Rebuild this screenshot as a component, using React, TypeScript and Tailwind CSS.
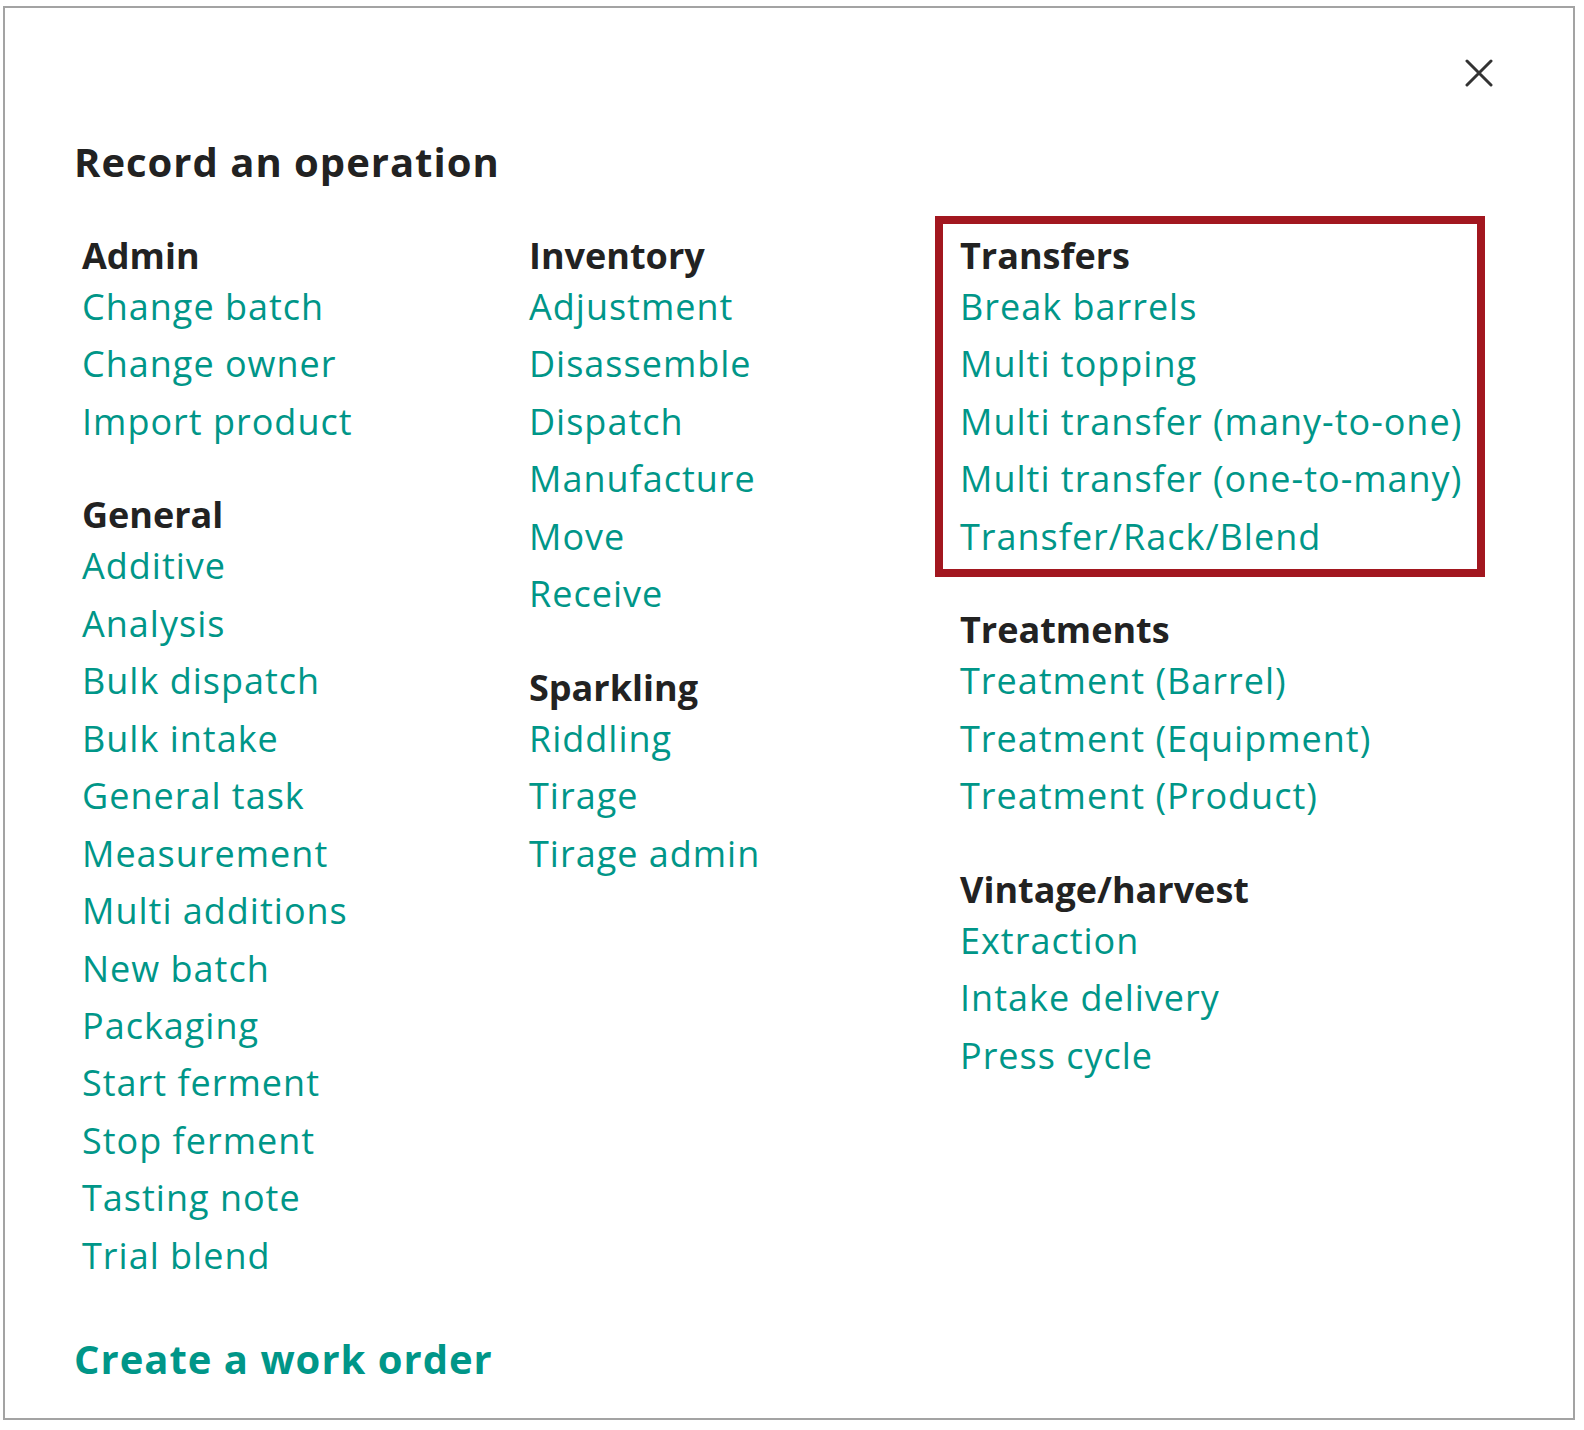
import React from 'react';

type Section = { title: string; items: string[]; highlight?: boolean };

const columns: Section[][] = [
  [
    { title: 'Admin', items: ['Change batch', 'Change owner', 'Import product'] },
    {
      title: 'General',
      items: [
        'Additive',
        'Analysis',
        'Bulk dispatch',
        'Bulk intake',
        'General task',
        'Measurement',
        'Multi additions',
        'New batch',
        'Packaging',
        'Start ferment',
        'Stop ferment',
        'Tasting note',
        'Trial blend',
      ],
    },
  ],
  [
    {
      title: 'Inventory',
      items: ['Adjustment', 'Disassemble', 'Dispatch', 'Manufacture', 'Move', 'Receive'],
    },
    { title: 'Sparkling', items: ['Riddling', 'Tirage', 'Tirage admin'] },
  ],
  [
    {
      title: 'Transfers',
      highlight: true,
      items: [
        'Break barrels',
        'Multi topping',
        'Multi transfer (many-to-one)',
        'Multi transfer (one-to-many)',
        'Transfer/Rack/Blend',
      ],
    },
    {
      title: 'Treatments',
      items: ['Treatment (Barrel)', 'Treatment (Equipment)', 'Treatment (Product)'],
    },
    { title: 'Vintage/harvest', items: ['Extraction', 'Intake delivery', 'Press cycle'] },
  ],
];

function OperationSection({ section, first }: { section: Section; first: boolean }) {
  return (
    <div className={first ? 'relative' : 'relative mt-[43px]'}>
      {section.highlight && (
        <div className="pointer-events-none absolute -left-[25px] -top-[18.5px] -bottom-[12px] w-[550px] border-8 border-[#a2171f]" />
      )}
      <h3 className="text-[36px] leading-[44px] font-bold text-[#222222]">{section.title}</h3>
      <ul>
        {section.items.map((item) => (
          <li key={item}>
            <a className="text-[36px] leading-[57.45px] tracking-[1px] text-[#009688] whitespace-nowrap cursor-pointer">
              {item}
            </a>
          </li>
        ))}
      </ul>
    </div>
  );
}

export default function App() {
  return (
    <div className="w-[1584px] h-[1430px] bg-white pt-[6px] pl-[3px] font-['Open_Sans',sans-serif]">
      <div className="w-[1572px] h-[1414px] border-2 border-[#a3a3a3] px-[69px]">
        {/* Close */}
        <div className="flex justify-end pt-[51px] pr-[11px]">
          <button className="w-[28px] h-[28px]" aria-label="Close">
            <svg width="28" height="28" viewBox="0 0 28 28" fill="none">
              <path
                d="M2 2L26 26M26 2L2 26"
                stroke="#333333"
                strokeWidth="3"
                strokeLinecap="round"
              />
            </svg>
          </button>
        </div>

        <h2 className="mt-[51px] text-[40px] leading-[48px] font-bold tracking-[1px] text-[#222222]">
          Record an operation
        </h2>

        {/* Operation columns */}
        <div className="mt-[48px] pl-[8px] flex">
          {columns.map((col, i) => (
            <div key={i} className={i === 0 ? 'w-[447px]' : i === 1 ? 'w-[431px]' : 'flex-1'}>
              {col.map((section, j) => (
                <OperationSection key={section.title} section={section} first={j === 0} />
              ))}
            </div>
          ))}
        </div>

        <a className="block mt-[51px] text-[40px] leading-[48px] font-bold tracking-[1px] text-[#009688] cursor-pointer">
          Create a work order
        </a>
      </div>
    </div>
  );
}
